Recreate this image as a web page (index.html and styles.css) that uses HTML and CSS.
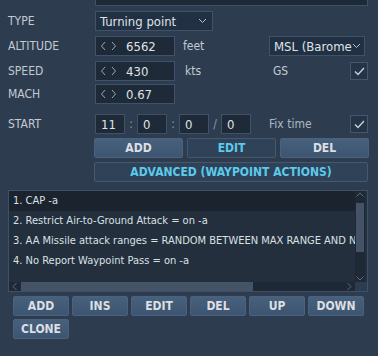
FILE: index.html
```html
<!DOCTYPE html>
<html lang="en">
<head>
    <meta charset="UTF-8">
    <title>Waypoint</title>
    <link rel="stylesheet" href="styles.css">
</head>
<body>
    <div class="painel">
        <div class="linha linha-nome">
            <span class="rotulo">NAME</span>
            <div class="campo campo-nome"></div>
        </div>

        <div class="linha linha-tipo">
            <span class="rotulo">TYPE</span>
            <div class="campo seletor seletor-tipo">
                <span>Turning point</span>
                <svg class="seta" width="9" height="6" viewBox="0 0 9 6"><polyline points="1,1 4.5,4.5 8,1" fill="none" stroke="#b9c2cc" stroke-width="1"/></svg>
            </div>
        </div>

        <div class="linha linha-alt">
            <span class="rotulo">ALTITUDE</span>
            <div class="campo giro">
                <svg class="setas" width="18" height="10" viewBox="0 0 18 10"><polyline points="5,1 1.5,5 5,9" fill="none" stroke="#9aa6b2" stroke-width="1"/><polyline points="12,1 15.5,5 12,9" fill="none" stroke="#9aa6b2" stroke-width="1"/></svg>
                <span>6562</span>
            </div>
            <span class="unidade">feet</span>
            <div class="campo seletor seletor-msl">
                <span>MSL (Barome</span>
                <svg class="seta" width="9" height="6" viewBox="0 0 9 6"><polyline points="1,1 4.5,4.5 8,1" fill="none" stroke="#b9c2cc" stroke-width="1"/></svg>
            </div>
        </div>

        <div class="linha linha-vel">
            <span class="rotulo">SPEED</span>
            <div class="campo giro">
                <svg class="setas" width="18" height="10" viewBox="0 0 18 10"><polyline points="5,1 1.5,5 5,9" fill="none" stroke="#9aa6b2" stroke-width="1"/><polyline points="12,1 15.5,5 12,9" fill="none" stroke="#9aa6b2" stroke-width="1"/></svg>
                <span>430</span>
            </div>
            <span class="unidade unidade-kts">kts</span>
            <span class="texto-gs">GS</span>
            <div class="caixa">
                <svg width="11" height="9" viewBox="0 0 11 9"><polyline points="1,4.5 4,7.5 10,1" fill="none" stroke="#c9d0d7" stroke-width="1.4"/></svg>
            </div>
        </div>

        <div class="linha linha-mach">
            <span class="rotulo">MACH</span>
            <div class="campo giro">
                <svg class="setas" width="18" height="10" viewBox="0 0 18 10"><polyline points="5,1 1.5,5 5,9" fill="none" stroke="#9aa6b2" stroke-width="1"/><polyline points="12,1 15.5,5 12,9" fill="none" stroke="#9aa6b2" stroke-width="1"/></svg>
                <span>0.67</span>
            </div>
        </div>

        <div class="linha linha-inicio">
            <span class="rotulo">START</span>
            <div class="campo hora">11</div>
            <span class="sep">:</span>
            <div class="campo hora">0</div>
            <span class="sep">:</span>
            <div class="campo hora">0</div>
            <span class="sep">/</span>
            <div class="campo hora">0</div>
            <span class="texto-fix">Fix time</span>
            <div class="caixa">
                <svg width="11" height="9" viewBox="0 0 11 9"><polyline points="1,4.5 4,7.5 10,1" fill="none" stroke="#c9d0d7" stroke-width="1.4"/></svg>
            </div>
        </div>

        <div class="botoes-ponto">
            <button class="botao">ADD</button>
            <button class="botao botao-ativo">EDIT</button>
            <button class="botao">DEL</button>
        </div>

        <button class="botao botao-ativo botao-avancado">ADVANCED (WAYPOINT ACTIONS)</button>

        <div class="lista">
            <div class="lista-corpo">
                <div class="itens">
                    <div class="item selecionado">1. CAP -a</div>
                    <div class="item">2. Restrict Air-to-Ground Attack = on -a</div>
                    <div class="item">3. AA Missile attack ranges = RANDOM BETWEEN MAX RANGE AND NO ESCAPE RANGE -a</div>
                    <div class="item">4. No Report Waypoint Pass = on -a</div>
                </div>
                <div class="rolagem-v">
                    <svg width="10" height="8" viewBox="0 0 10 8"><polyline points="1.5,5.5 5,2 8.5,5.5" fill="none" stroke="#5d6b7a" stroke-width="1"/></svg>
                    <div class="trilho-v"><div class="polegar-v"></div></div>
                    <svg width="10" height="8" viewBox="0 0 10 8"><polyline points="1.5,2.5 5,6 8.5,2.5" fill="none" stroke="#5d6b7a" stroke-width="1"/></svg>
                </div>
            </div>
            <div class="rolagem-h">
                <svg width="8" height="9" viewBox="0 0 8 9"><polyline points="5.5,1 2,4.5 5.5,8" fill="none" stroke="#5d6b7a" stroke-width="1"/></svg>
                <div class="trilho-h"><div class="polegar-h"></div></div>
                <svg width="8" height="9" viewBox="0 0 8 9"><polyline points="2.5,1 6,4.5 2.5,8" fill="none" stroke="#5d6b7a" stroke-width="1"/></svg>
                <div class="canto"></div>
            </div>
        </div>

        <div class="botoes-acao">
            <button class="botao">ADD</button>
            <button class="botao">INS</button>
            <button class="botao">EDIT</button>
            <button class="botao">DEL</button>
            <button class="botao">UP</button>
            <button class="botao">DOWN</button>
            <button class="botao">CLONE</button>
        </div>
    </div>
</body>
</html>
```

FILE: styles.css
```css
body {
    margin: 0;
    background-color: #2d3d4f;
    font-family: "DejaVu Sans Condensed", "DejaVu Sans", sans-serif;
    font-stretch: condensed;
    font-size: 12px;
    color: #c9d0d7;
    overflow: hidden;
}

.painel {
    padding: 0 10px 0 8px;
}

.linha {
    display: flex;
    align-items: center;
    height: 20px;
}

.linha-nome { margin-top: -14px; }
.linha-tipo { margin-top: 5px; }
.linha-alt { margin-top: 5px; }
.linha-vel { margin-top: 5px; }
.linha-mach { margin-top: 3px; }
.linha-inicio { margin-top: 10px; }

.rotulo {
    width: 87px;
    flex-shrink: 0;
    color: #c3cad2;
}

.campo {
    box-sizing: border-box;
    height: 20px;
    background-color: #1f2a38;
    border: 1px solid #3e526a;
    color: #dfe3e8;
    display: flex;
    align-items: center;
}

.campo-nome {
    flex: 1;
}

.seletor {
    padding: 0 5px 0 4px;
    justify-content: space-between;
    background-color: #223043;
    font-size: 13px;
    white-space: nowrap;
    overflow: hidden;
}

.seletor-tipo {
    width: 118px;
}

.seletor-msl {
    width: 96px;
    padding-right: 3px;
}

.seta {
    flex-shrink: 0;
}

.giro {
    width: 80px;
    padding-left: 4px;
    font-size: 13px;
}

.setas {
    margin-right: 8px;
}

.unidade {
    width: 86px;
    padding-left: 8px;
    color: #c3cad2;
}

.unidade-kts {
    width: 88px;
    padding-left: 10px;
}

.texto-gs {
    color: #c3cad2;
}

.caixa {
    box-sizing: border-box;
    width: 18px;
    height: 18px;
    margin-left: auto;
    background-color: #253447;
    border: 1px solid #44576d;
    display: flex;
    align-items: center;
    justify-content: center;
}

.hora {
    width: 30px;
    padding-left: 5px;
    font-size: 13px;
}

.sep {
    width: 12px;
    text-align: center;
    color: #8d99a6;
}

.texto-fix {
    margin-left: 18px;
    color: #aeb7c1;
}

.botao {
    box-sizing: border-box;
    height: 20px;
    padding: 0;
    font-family: inherit;
    font-stretch: condensed;
    font-size: 12px;
    font-weight: bold;
    color: #dcdfe3;
    background: linear-gradient(#47607c, #3d5570);
    border: 1px solid #4a627d;
    border-radius: 2px;
}

.botao-ativo {
    color: #5ccbec;
    background: #2f4258;
    border: 1px solid #44596f;
}

.botoes-ponto {
    display: grid;
    grid-template-columns: 89px 89px 89px;
    column-gap: 4px;
    margin: 4px 0 0 86px;
}

.botao-avancado {
    display: block;
    width: 274px;
    margin: 4px 0 0 86px;
}

.lista {
    box-sizing: border-box;
    height: 102px;
    margin-top: 8px;
    border: 1px solid #3e5168;
    background-color: #232f3d;
}

.lista-corpo {
    display: flex;
    height: 91px;
}

.itens {
    flex: 1;
    overflow: hidden;
    white-space: nowrap;
}

.item {
    height: 20px;
    line-height: 20px;
    padding-left: 4px;
    font-size: 11px;
    color: #dbe0e5;
}

.selecionado {
    background-color: #1b232e;
}

.rolagem-v {
    width: 10px;
    margin-right: 2px;
    background-color: #1f2935;
    display: flex;
    flex-direction: column;
    align-items: center;
}

.trilho-v {
    flex: 1;
    width: 100%;
    padding: 4px 0;
}

.polegar-v {
    height: 49px;
    margin: 0 1px;
    background-color: #445466;
}

.rolagem-h {
    display: flex;
    align-items: center;
    height: 9px;
    background-color: #1f2935;
}

.rolagem-h svg {
    margin: 0 2px;
}

.trilho-h {
    flex: 1;
    height: 100%;
}

.polegar-h {
    width: 232px;
    height: 100%;
    background-color: #445466;
}

.canto {
    width: 12px;
    height: 100%;
    background-color: #2d3d4f;
}

.botoes-acao {
    display: grid;
    grid-template-columns: repeat(6, 56px);
    gap: 3px;
    margin: 4px 0 0 5px;
}
```
